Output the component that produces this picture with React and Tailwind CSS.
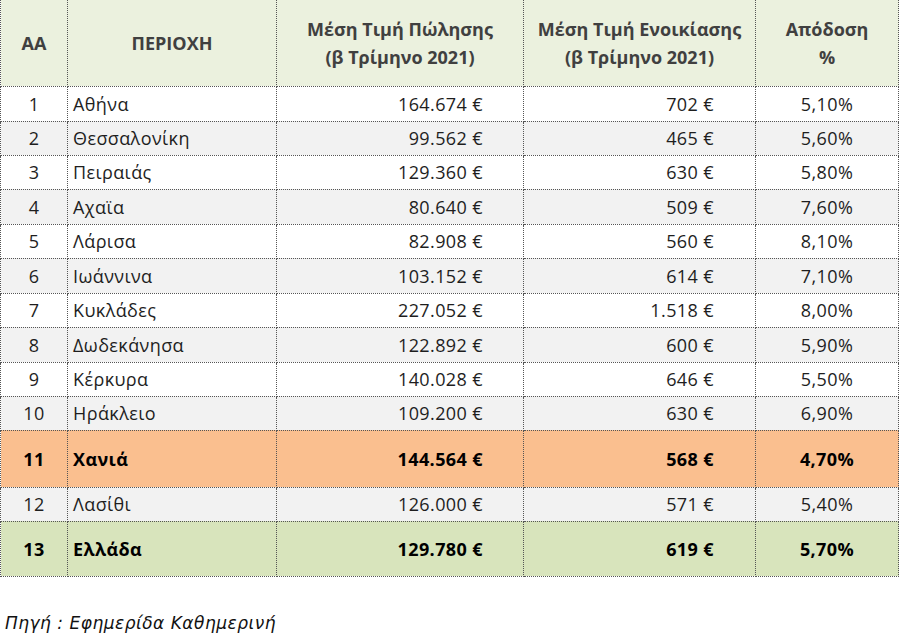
import React from "react";

const rows = [
  ["1", "Αθήνα", "164.674 €", "702 €", "5,10%"],
  ["2", "Θεσσαλονίκη", "99.562 €", "465 €", "5,60%"],
  ["3", "Πειραιάς", "129.360 €", "630 €", "5,80%"],
  ["4", "Αχαϊα", "80.640 €", "509 €", "7,60%"],
  ["5", "Λάρισα", "82.908 €", "560 €", "8,10%"],
  ["6", "Ιωάννινα", "103.152 €", "614 €", "7,10%"],
  ["7", "Κυκλάδες", "227.052 €", "1.518 €", "8,00%"],
  ["8", "Δωδεκάνησα", "122.892 €", "600 €", "5,90%"],
  ["9", "Κέρκυρα", "140.028 €", "646 €", "5,50%"],
  ["10", "Ηράκλειο", "109.200 €", "630 €", "6,90%"],
];

const heights = ["h-[35px]", "h-[34px]", "h-[34px]", "h-[35px]", "h-[34px]", "h-[35px]", "h-[34px]", "h-[35px]", "h-[34px]", "h-[34px]"];

const cell = "border border-dotted border-[#555]";

function Row({ r, bg, h, bold }) {
  const w = bold ? "font-bold text-black" : "font-normal text-[#1e1e1e]";
  return (
    <tr className={`${bg} ${h} ${w} tracking-[0.4px]`}>
      <td className={`${cell} text-center`}>{r[0]}</td>
      <td className={`${cell} pl-[5px] text-left`}>{r[1]}</td>
      <td className={`${cell} pr-[40px] text-right`}>{r[2]}</td>
      <td className={`${cell} pr-[41px] text-right`}>{r[3]}</td>
      <td className={`${cell} text-center`}>{r[4]}</td>
    </tr>
  );
}

export default function App() {
  return (
    <div className="w-[900px] h-[637px] bg-white overflow-hidden" style={{ fontFamily: "'Open Sans', Lato, sans-serif" }}>
      <table className="border-collapse table-fixed w-[898px] text-[18px] leading-none">
        <colgroup>
          <col className="w-[67px]" />
          <col className="w-[209px]" />
          <col className="w-[247px]" />
          <col className="w-[232px]" />
          <col className="w-[143px]" />
        </colgroup>
        <thead>
          <tr className="bg-[#ebf1de] h-[86px] text-[#404040] font-semibold text-[18px]">
            <th className={`${cell} border-t-0 text-center`}>AA</th>
            <th className={`${cell} border-t-0 text-center`}>ΠΕΡΙΟΧΗ</th>
            <th className={`${cell} border-t-0 text-center leading-[28px]`}>Μέση Τιμή Πώλησης<br />(β Τρίμηνο 2021)</th>
            <th className={`${cell} border-t-0 text-center leading-[28px]`}>Μέση Τιμή Ενοικίασης<br />(β Τρίμηνο 2021)</th>
            <th className={`${cell} border-t-0 text-center leading-[28px]`}>Απόδοση<br />%</th>
          </tr>
        </thead>
        <tbody>
          {rows.map((r, i) => (
            <Row key={r[0]} r={r} h={heights[i]} bg={i % 2 === 0 ? "bg-white" : "bg-[#f2f2f2]"} />
          ))}
          <Row r={["11", "Χανιά", "144.564 €", "568 €", "4,70%"]} h="h-[57px]" bg="bg-[#fabf8f]" bold />
          <Row r={["12", "Λασίθι", "126.000 €", "571 €", "5,40%"]} h="h-[34px]" bg="bg-[#f2f2f2]" />
          <Row r={["13", "Ελλάδα", "129.780 €", "619 €", "5,70%"]} h="h-[55px]" bg="bg-[#d8e4bc]" bold />
        </tbody>
      </table>
      <div className="mt-[34px] pl-[5px] italic text-[17px] tracking-[0.5px] text-[#111]" style={{ fontFamily: "'DejaVu Sans', Verdana, sans-serif" }}>
        Πηγή : Εφημερίδα Καθημερινή
      </div>
    </div>
  );
}
